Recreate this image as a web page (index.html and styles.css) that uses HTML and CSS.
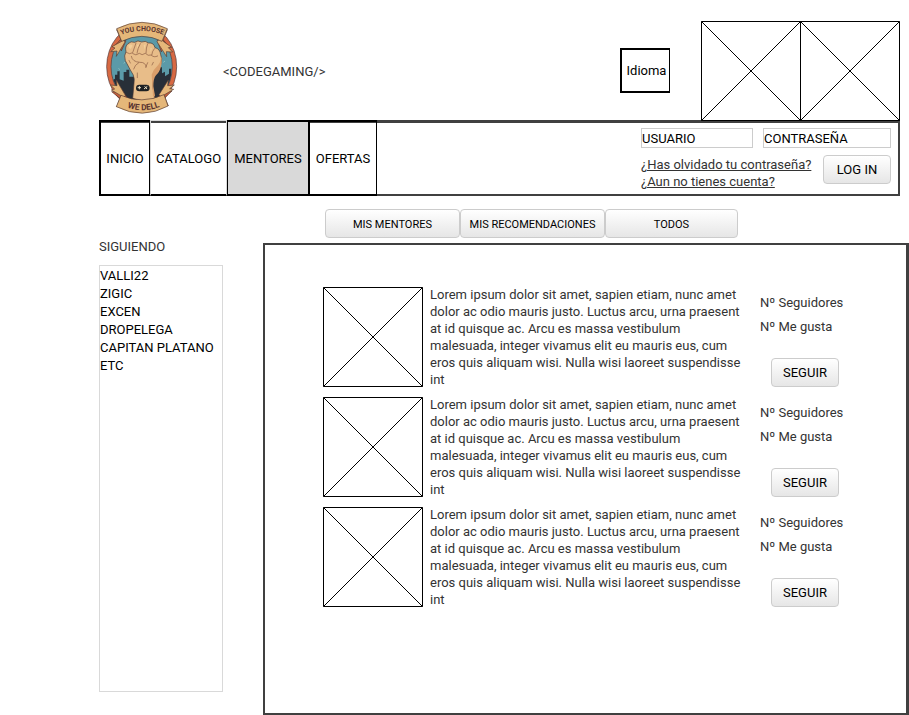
FILE: index.html
```html
<!DOCTYPE html>
<html lang="es">
<head>
<meta charset="utf-8">
<title>Codegaming - Mentores</title>
<link rel="stylesheet" href="styles.css">
</head>
<body>
<header class="header">
  <svg class="logo" viewBox="24 18 222 282" role="img" aria-label="Codegaming">
    <defs>
      <path id="arc-top" d="M68 62Q138 34 210 62"/>
      <path id="arc-bottom" d="M76 270Q140 302 210 268"/>
      <clipPath id="oval"><ellipse cx="137" cy="155" rx="91" ry="110"/></clipPath>
    </defs>
    <ellipse cx="137" cy="155" rx="105" ry="125" fill="#d76943" stroke="#4d3537" stroke-width="2"/>
    <ellipse cx="137" cy="155" rx="92" ry="112" fill="#5b9aa8" stroke="#573d3b" stroke-width="2"/>
    <g clip-path="url(#oval)">
      <path fill="#282f38" d="M40 290V190l10-5v10l7-4v-12h7v-10h7v24l12 4v-26h8v-7h9v21h14v20h50v-20l8-7v-15h8v8h9v-14h9v18l9-5v14l12-8v-15h7v24l8-3v108z"/>
      <path stroke="#8ec0bf" stroke-width="3" d="M65 115l5-5M83 145l4-3M195 104l5 4M207 138l-5 4M188 160l4 2M68 160l3 4"/>
    </g>
    <path fill="#e8bd89" stroke="#473331" stroke-width="2" stroke-linejoin="round" d="M110 250l5-57q-1-13-12-28l-15-28q-5-15 2-27-4-16 6-24 9-9 20-4 10-8 20-1 13-5 22 3 15-2 19 14 15 3 17 21 5 11 2 23-4 24-20 39-7 12-5 37l6 32q-33 15-67 0z"/>
    <path fill="#d99e6a" d="M194 121q3 18-8 30-15 14-19 28l4 66 6-3-5-28q0-24 8-33 15-15 17-38 1-15-3-22z"/>
    <path fill="none" stroke="#8a5a42" stroke-width="2" stroke-linecap="round" d="M90 112q12 8 20 1l10-29M133 86q-8 14-10 28M155 86q-5 12-5 28M175 101q-7 8-8 20M110 116q10 8 20-1 8 8 18 0 8 9 18 5 7 9 19 3M106 124q3 17 26 18 16-1 19 14M128 143q-12 7-15 19M155 143l-6 14M124 174v14M99 136l4 8M172 142l-4 8"/>
    <path fill="#f3cf99" d="M97 92q7-7 13 0l-6 10q-6-1-7-10zM123 90l6-3-5 14zM143 90l6-2-3 16zM163 100l5-1-4 13z"/>
    <rect x="120" y="209" width="41" height="20" rx="10" fill="#1d2023"/>
    <path fill="none" stroke="#efe2c5" stroke-width="3" d="M125 218h10M130 213v10M144 222l10-8M146 214l7 8"/>
    <g stroke="#573b32" stroke-width="2" stroke-linejoin="round">
      <path fill="#c65f3c" d="M75 73l-22 22 18-4 5 17 14-31zM200 73l22 25-18-5-8 18-12-34zM74 252l-27-22 23 1-1-18 25 36zM205 250l23-22-20 1 3-16-25 35z"/>
      <path fill="#e5b779" d="M62 44l15 35-29 16 9 4-13 11 19-2-2 16 26-43zM214 44l-14 34 27 19-10 1 13 13-19-1 1 15-29-45zM62 276l13-34-29-17 10-3-13-12 20 2-2-17 27 46zM217 273l-13-33 29-17-12-2 14-11-20 2 2-17-28 44z"/>
      <path fill="#e5b779" d="M62 41Q138 3 214 41l-16 38Q138 49 77 79zM75 241q61 28 129-2l12 34q-76 42-155 2z"/>
    </g>
    <text class="logo-text logo-top"><textPath href="#arc-top" startOffset="50%">YOU CHOOSE</textPath></text>
    <text class="logo-text"><textPath href="#arc-bottom" startOffset="50%">WE DELL</textPath></text>
  </svg>
  <span class="brand">&lt;CODEGAMING/&gt;</span>
  <button class="language" type="button">Idioma</button>
  <div class="banners">
    <svg class="placeholder" viewBox="0 0 100 100" aria-hidden="true"><path d="M.5.5h99v99H.5zM.5.5l99 99M99.500.5l-99 99"/></svg>
    <svg class="placeholder" viewBox="0 0 100 100" aria-hidden="true"><path d="M.5.5h99v99H.5zM.5.5l99 99M99.500.5l-99 99"/></svg>
  </div>
</header>

<div class="bar">
  <nav class="nav">
    <a class="tab tab-first" href="#">INICIO</a>
    <a class="tab tab-light" href="#">CATALOGO</a>
    <a class="tab tab-active" href="#">MENTORES</a>
    <a class="tab tab-last" href="#">OFERTAS</a>
  </nav>
  <form class="login">
    <div class="fields">
      <input class="field user" type="text" aria-label="Usuario" placeholder="USUARIO">
      <input class="field pass" type="password" aria-label="Contraseña" placeholder="CONTRASEÑA">
    </div>
    <div class="login-actions">
      <div class="links">
        <a href="#">¿Has olvidado tu contraseña?</a>
        <a href="#">¿Aun no tienes cuenta?</a>
      </div>
      <button class="button" type="button">LOG IN</button>
    </div>
  </form>
</div>

<div class="content">
  <aside class="following">
    <h2 class="following-title">SIGUIENDO</h2>
    <ul class="following-list">
      <li>VALLI22</li>
      <li>ZIGIC</li>
      <li>EXCEN</li>
      <li>DROPELEGA</li>
      <li>CAPITAN PLATANO</li>
      <li>ETC</li>
    </ul>
  </aside>
  <main class="main">
    <div class="filters">
      <button class="button filter filter-mine" type="button">MIS MENTORES</button>
      <button class="button filter filter-picks" type="button">MIS RECOMENDACIONES</button>
      <button class="button filter filter-all" type="button">TODOS</button>
    </div>
    <section class="mentors">
      <article class="mentor">
        <svg class="placeholder" viewBox="0 0 100 100" aria-hidden="true"><path d="M.5.5h99v99H.5zM.5.5l99 99M99.500.5l-99 99"/></svg>
        <p class="bio">Lorem ipsum dolor sit amet, sapien etiam, nunc amet dolor ac odio mauris justo. Luctus arcu, urna praesent at id quisque ac. Arcu es massa vestibulum malesuada, integer vivamus elit eu mauris eus, cum eros quis aliquam wisi. Nulla wisi laoreet suspendisse int</p>
        <div class="stats">
          <span>Nº Seguidores</span>
          <span>Nº Me gusta</span>
          <button class="button follow" type="button">SEGUIR</button>
        </div>
      </article>
      <article class="mentor">
        <svg class="placeholder" viewBox="0 0 100 100" aria-hidden="true"><path d="M.5.5h99v99H.5zM.5.5l99 99M99.500.5l-99 99"/></svg>
        <p class="bio">Lorem ipsum dolor sit amet, sapien etiam, nunc amet dolor ac odio mauris justo. Luctus arcu, urna praesent at id quisque ac. Arcu es massa vestibulum malesuada, integer vivamus elit eu mauris eus, cum eros quis aliquam wisi. Nulla wisi laoreet suspendisse int</p>
        <div class="stats">
          <span>Nº Seguidores</span>
          <span>Nº Me gusta</span>
          <button class="button follow" type="button">SEGUIR</button>
        </div>
      </article>
      <article class="mentor">
        <svg class="placeholder" viewBox="0 0 100 100" aria-hidden="true"><path d="M.5.5h99v99H.5zM.5.5l99 99M99.500.5l-99 99"/></svg>
        <p class="bio">Lorem ipsum dolor sit amet, sapien etiam, nunc amet dolor ac odio mauris justo. Luctus arcu, urna praesent at id quisque ac. Arcu es massa vestibulum malesuada, integer vivamus elit eu mauris eus, cum eros quis aliquam wisi. Nulla wisi laoreet suspendisse int</p>
        <div class="stats">
          <span>Nº Seguidores</span>
          <span>Nº Me gusta</span>
          <button class="button follow" type="button">SEGUIR</button>
        </div>
      </article>
    </section>
  </main>
</div>
</body>
</html>
```
FILE: styles.css
```css
* {
  box-sizing: border-box;
}

body {
  display: flex;
  flex-direction: column;
  min-height: 100vh;
  margin: 0;
  padding-left: 99px;
  background: #fff;
  color: #333;
  font: 13px/17px Roboto, "Liberation Sans", sans-serif;
}

button,
input {
  font: inherit;
  color: #000;
}

.header {
  display: flex;
  align-items: flex-start;
  margin-right: 9px;
  padding-top: 21px;
}

.logo {
  flex: none;
  width: 74px;
  height: 94px;
  margin-left: 5px;
}

.logo-text {
  fill: #5a3430;
  font: 700 25px Roboto, sans-serif;
  text-anchor: middle;
}

.logo-top {
  font-size: 21px;
}

.brand {
  margin: 42px auto 0 45px;
}

.language {
  width: 50px;
  height: 45px;
  margin: 27px 31px 0 0;
  padding: 0 0 0 2px;
  border: 2px solid #000;
  border-right-width: 1px;
  background: #fff;
}

.banners {
  display: flex;
  z-index: 1;
}

.placeholder {
  flex: none;
  width: 100px;
  height: 100px;
  fill: none;
  stroke: #000;
}

.banners .placeholder + .placeholder {
  margin-left: -1px;
}

.bar {
  display: flex;
  justify-content: space-between;
  height: 76px;
  margin: -1px 9px 0 0;
  border: solid #404040;
  border-width: 3px 2px 2px;
}

.nav {
  display: flex;
  margin: -3px 0 -2px -2px;
}

.tab {
  display: flex;
  align-items: center;
  justify-content: center;
  border: 2px solid #000;
  color: #000;
  text-decoration: none;
}

.tab-first {
  width: 51px;
  border-right-width: 1px;
}

.tab-light {
  width: 77px;
  padding-top: 1px;
  border: solid #d9d9d9;
  border-width: 1px 1px 2px;
  border-bottom-color: #000;
  box-shadow: inset 0 1px #404040;
}

.tab-active {
  width: 81px;
  border-left-width: 1px;
  border-right-width: 0;
  background: #d9d9d9;
}

.tab-last {
  width: 69px;
  border-right-width: 1px;
}

.login {
  padding: 5px 7px 0 0;
}

.fields {
  display: flex;
  gap: 10px;
}

.field {
  height: 20px;
  padding: 0;
  border: 1px solid #ccc;
  background: #fff;
}

.field::placeholder {
  color: #000;
  opacity: 1;
}

.user {
  width: 112px;
}

.pass {
  width: 128px;
}

.login-actions {
  display: flex;
  justify-content: space-between;
  margin-top: 7px;
}

.links {
  display: flex;
  flex-direction: column;
  align-items: flex-start;
  padding-top: 1px;
}

.links a {
  color: #333;
}

.button {
  width: 68px;
  height: 29px;
  padding: 0;
  border: 1px solid #ccc;
  border-radius: 4px;
  background: linear-gradient(#fff, #e6e6e6);
}

.content {
  display: flex;
  flex: 1;
  gap: 40px;
  padding-top: 13px;
}

.following {
  display: flex;
  flex: none;
  flex-direction: column;
  width: 124px;
  padding: 29px 0 23px;
}

.following-title {
  margin: 0 0 10px;
  font-size: 13px;
  font-weight: 400;
}

.following-list {
  flex: 1;
  margin: 0;
  padding: 1px 0 0;
  border: 1px solid #d9d9d9;
  color: #000;
  line-height: 18px;
  list-style: none;
}

.main {
  display: flex;
  flex: 1;
  flex-direction: column;
  min-width: 0;
}

.filters {
  display: flex;
  margin: 0 0 5px 62px;
}

.filter {
  padding-top: 1px;
  font-size: 11px;
}

.filter-mine {
  width: 135px;
}

.filter-picks {
  width: 145px;
}

.filter-all {
  width: 133px;
}

.mentors {
  display: flex;
  flex: 1;
  flex-direction: column;
  gap: 8px;
  padding: 41px 0 0 58px;
  border: 2px solid #404040;
  border-right-width: 3px;
}

.mentor {
  display: flex;
}

.mentor .placeholder {
  margin-top: 1px;
}

.bio {
  flex: 0 1 318px;
  margin: 0 12px 0 7px;
}

.stats {
  display: flex;
  flex: none;
  flex-direction: column;
  gap: 7px;
  padding-top: 8px;
}

.follow {
  margin: 16px 0 0 11px;
}
```
